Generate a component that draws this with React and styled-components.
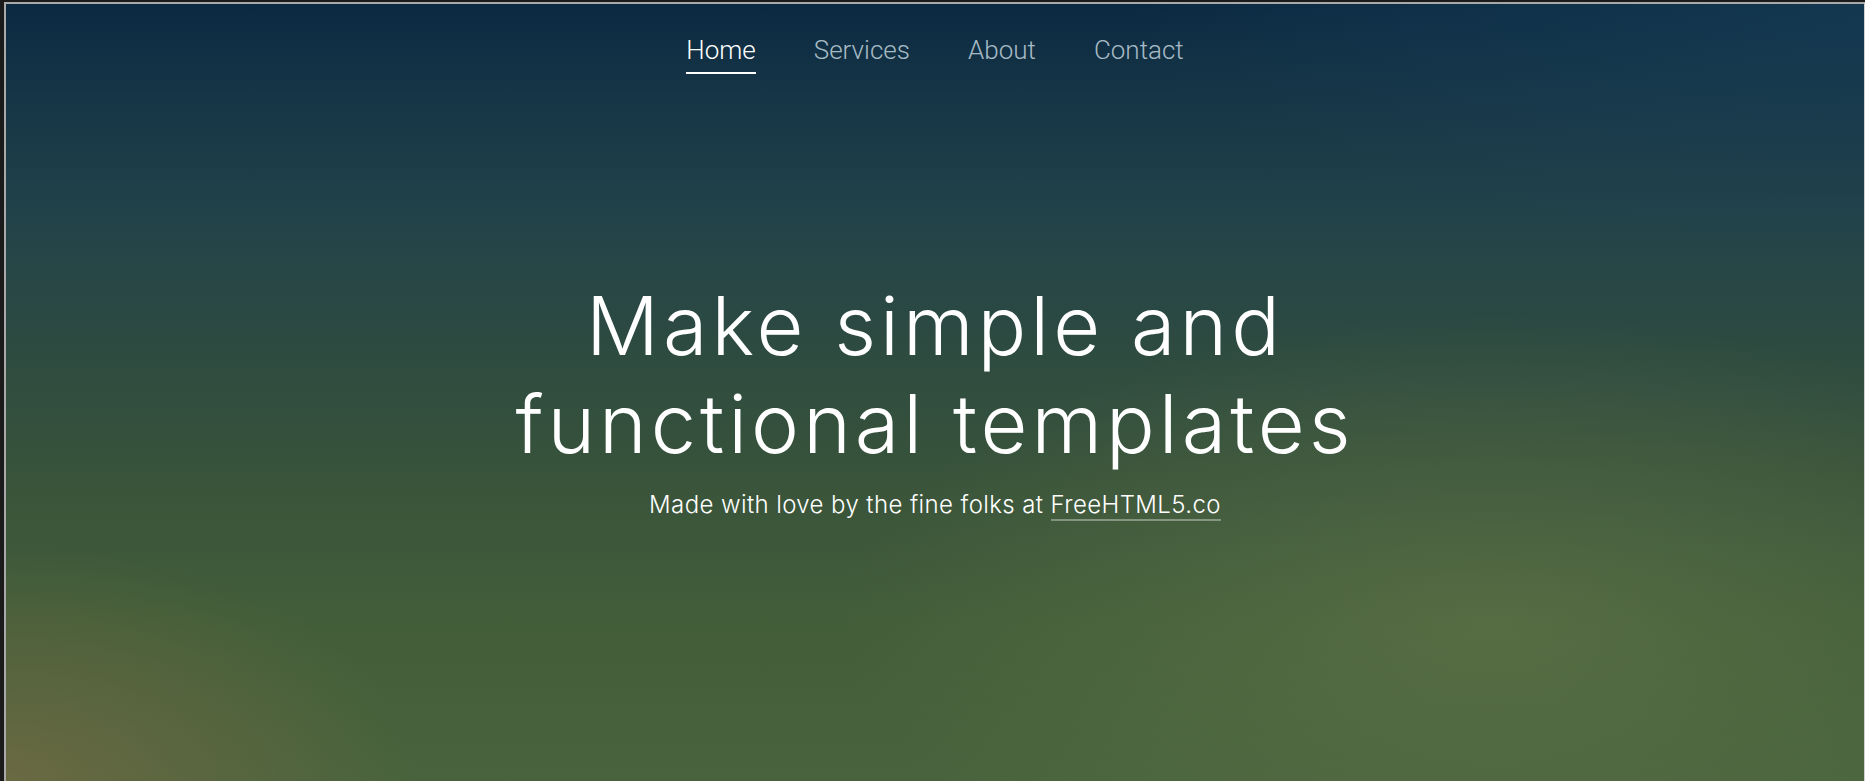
import React from "react";
import styled, { createGlobalStyle } from "styled-components";

const GlobalStyle = createGlobalStyle`
  html, body {
    margin: 0;
    padding: 0;
    background: #1b1b1b;
  }
  * {
    box-sizing: border-box;
  }
`;

const Frame = styled.div`
  min-height: 781px;
  padding: 2px 0 0 4px;
  background: #1b1b1b;
`;

const Hero = styled.section`
  height: 779px;
  display: flex;
  flex-direction: column;
  align-items: center;
  border-top: 2px solid #a9a9a9;
  border-left: 2px solid #a9a9a9;
  border-right: 1px solid #d2d2d2;
  font-family: Roboto, "Liberation Sans", sans-serif;
  color: #fff;
  background:
    radial-gradient(ellipse 22% 30% at 0% 100%, rgba(120, 108, 68, 0.7), transparent),
    radial-gradient(ellipse 35% 40% at 80% 80%, rgba(110, 125, 80, 0.45), transparent),
    radial-gradient(ellipse 40% 30% at 100% 0%, rgba(30, 75, 100, 0.4), transparent),
    linear-gradient(
      180deg,
      #0b2a42 0%,
      #163546 12%,
      #23434a 28%,
      #2e4b40 45%,
      #39543a 62%,
      #425e39 80%,
      #48633d 100%
    );
`;

const Nav = styled.ul`
  display: flex;
  gap: 58px;
  margin: 0;
  padding: 31px 0 0;
  list-style: none;
`;

const NavLink = styled.a`
  display: block;
  padding-bottom: 6px;
  font-size: 26px;
  font-weight: 300;
  line-height: 31px;
  text-decoration: none;
  color: ${(p) => (p.$active ? "#ffffff" : "rgba(220, 232, 240, 0.75)")};
  border-bottom: 2px solid ${(p) => (p.$active ? "#ffffff" : "transparent")};
`;

const Content = styled.div`
  margin-top: 203px;
  text-align: center;
  font-family: Inter, Roboto, sans-serif;
`;

const Title = styled.h1`
  margin: 0;
  font-size: 81px;
  font-weight: 300;
  line-height: 98px;
  letter-spacing: 4px;
`;

const Lead = styled.p`
  margin: 13px 0 0;
  font-size: 24px;
  font-weight: 300;
  line-height: 37px;
  letter-spacing: 0.4px;
`;

const Credit = styled.a`
  color: #fff;
  text-decoration: none;
  border-bottom: 2px solid rgba(255, 255, 255, 0.35);
`;

const links = ["Home", "Services", "About", "Contact"];

function App() {
  return (
    <>
      <GlobalStyle />
      <Frame>
        <Hero>
          <Nav>
            {links.map((l, i) => (
              <li key={l}>
                <NavLink href="#" $active={i === 0}>
                  {l}
                </NavLink>
              </li>
            ))}
          </Nav>
          <Content>
            <Title>
              Make simple and
              <br />
              functional templates
            </Title>
            <Lead>
              Made with love by the fine folks at <Credit href="#">FreeHTML5.co</Credit>
            </Lead>
          </Content>
        </Hero>
      </Frame>
    </>
  );
}

export default App;
